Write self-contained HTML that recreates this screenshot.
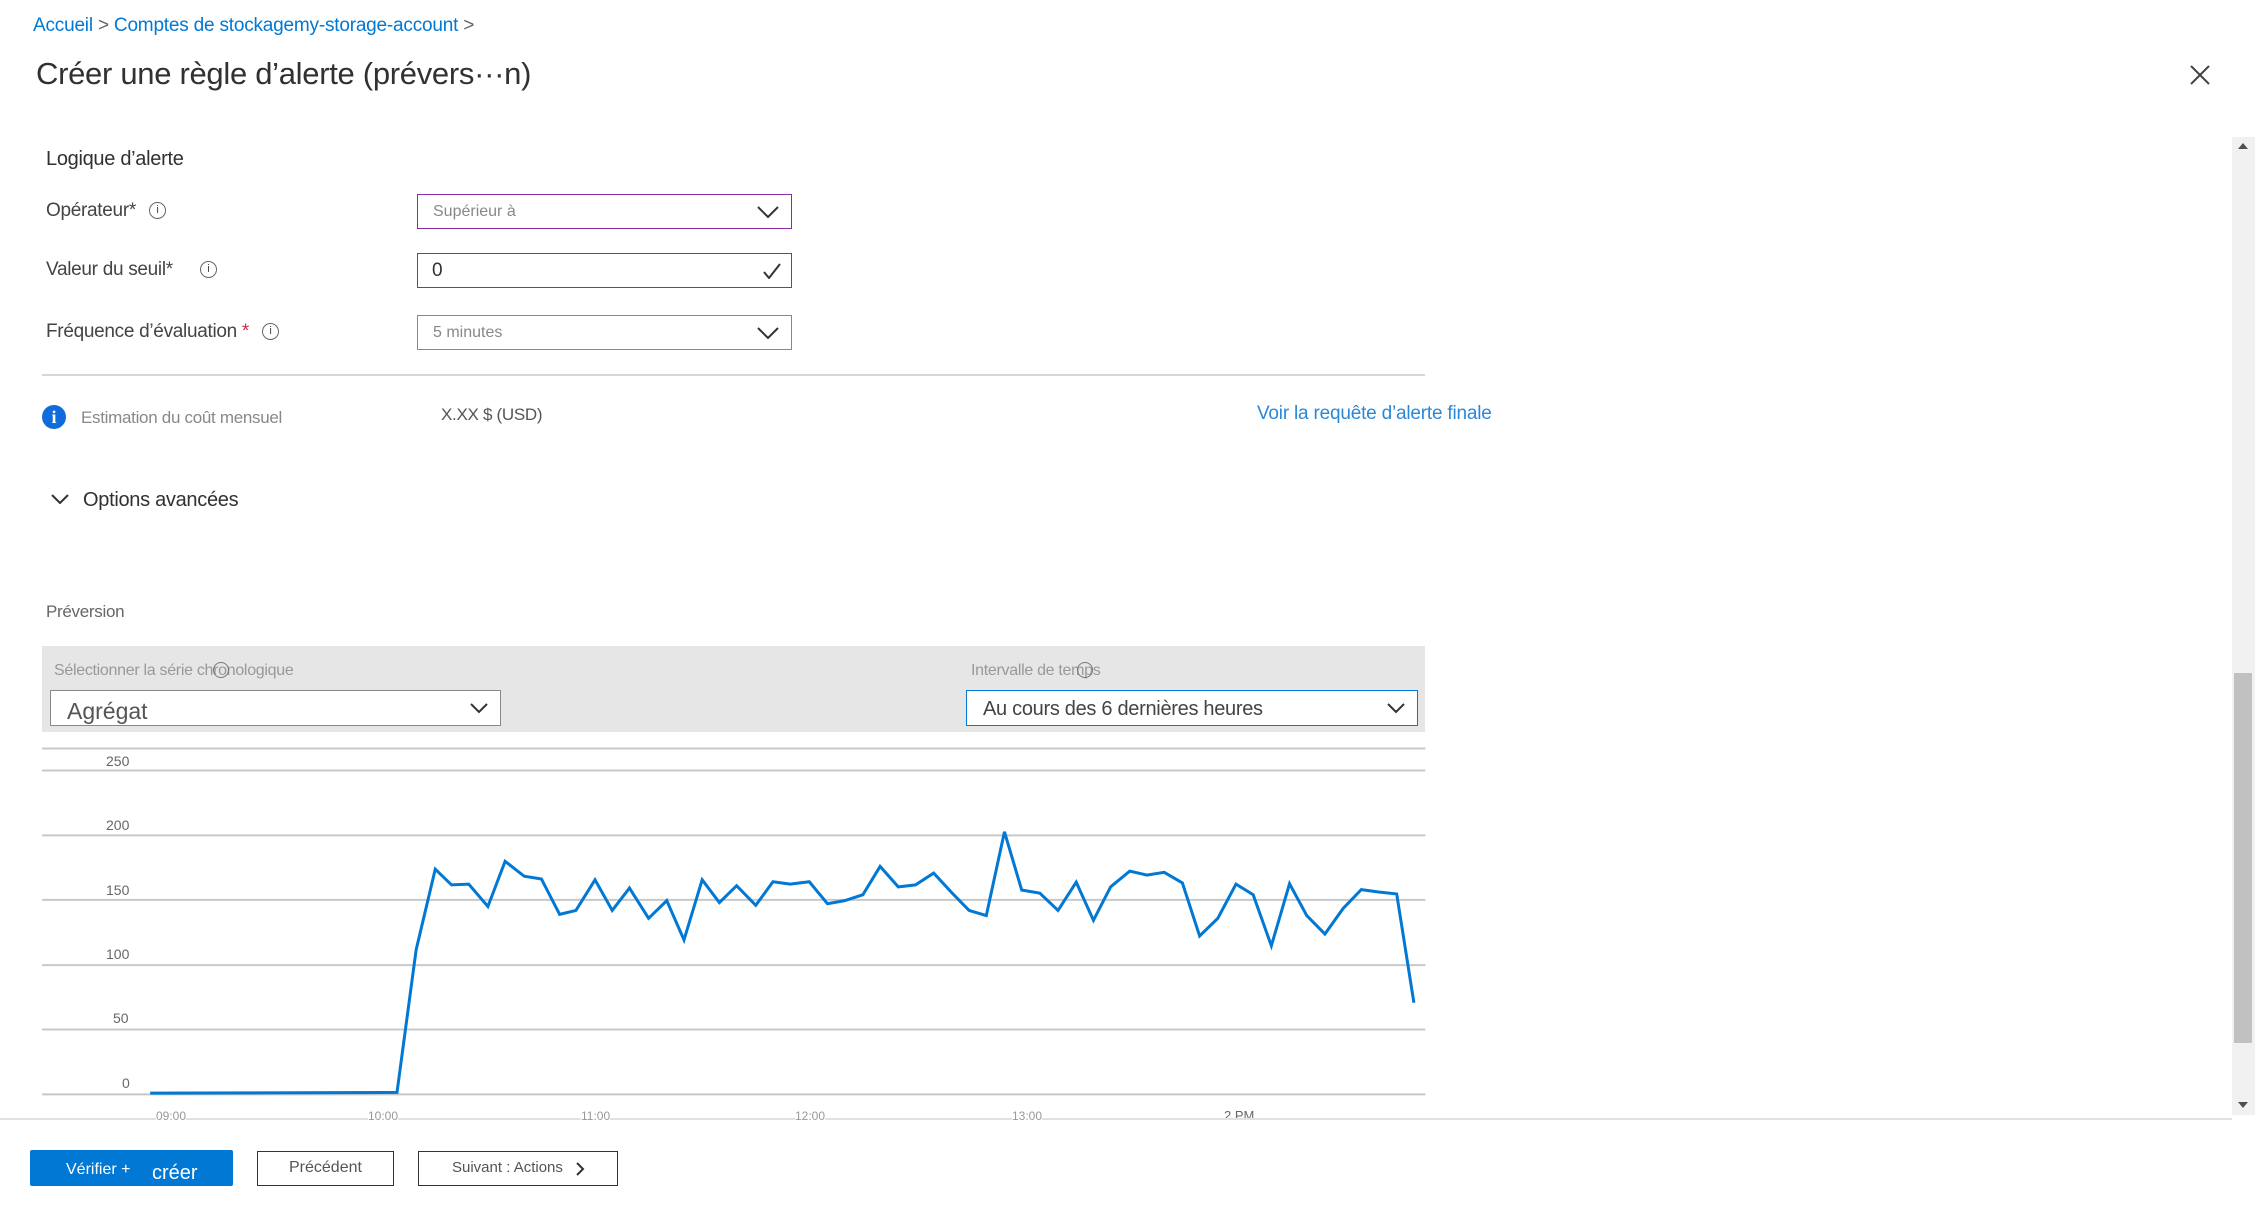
<!DOCTYPE html>
<html><head><meta charset="utf-8"><style>
body{margin:0;width:2255px;height:1215px;background:#fff;font-family:"Liberation Sans",sans-serif;position:relative;overflow:hidden;color:#323130}
.a{position:absolute;white-space:nowrap}
.box{position:absolute;box-sizing:border-box;background:#fff}
.lbl{font-size:19px;color:#444;letter-spacing:-0.3px}
.g{color:#8a8886}
</style></head><body>
<div class="a" style="left:33px;top:15px;font-size:19px;color:#0078d4;letter-spacing:-0.2px">Accueil <span style="color:#666">&gt;</span> Comptes de stockagemy-storage-account <span style="color:#666">&gt;</span></div>
<div class="a" style="left:36px;top:56px;font-size:31px;color:#323130;letter-spacing:-0.3px">Créer une règle d’alerte (prévers···n)</div>
<svg class="a" style="left:2190px;top:65px" width="20" height="20"><path d="M1 1L19 19M19 1L1 19" stroke="#444" stroke-width="2"/></svg>
<div class="a" style="left:2232px;top:137px;width:23px;height:978px;background:#f1f1f1"></div>
<div class="a" style="left:2234px;top:673px;width:18px;height:370px;background:#c1c1c1"></div>
<div class="a" style="left:2238px;top:143px;border:5px solid transparent;border-bottom:6px solid #505050;border-top:0"></div>
<div class="a" style="left:2238px;top:1102px;border:5px solid transparent;border-top:6px solid #505050;border-bottom:0"></div>

<div class="a" style="left:46px;top:148px;font-size:20px;color:#323130;letter-spacing:-0.3px">Logique d’alerte</div>
<div class="a lbl" style="left:46px;top:200px">Opérateur* <span style="display:inline-block;width:15px;height:15px;border:1.5px solid #666;border-radius:50%;font-size:11px;text-align:center;line-height:15px;margin-left:8px;vertical-align:middle">i</span></div>
<div class="a lbl" style="left:46px;top:259px">Valeur du seuil* <span style="display:inline-block;width:15px;height:15px;border:1.5px solid #666;border-radius:50%;font-size:11px;text-align:center;line-height:15px;margin-left:22px;vertical-align:middle">i</span></div>
<div class="a lbl" style="left:46px;top:321px">Fréquence d’évaluation <span style="color:#c4314b">*</span> <span style="display:inline-block;width:15px;height:15px;border:1.5px solid #666;border-radius:50%;font-size:11px;text-align:center;line-height:15px;margin-left:8px;vertical-align:middle">i</span></div>
<div class="box" style="left:417px;top:194px;width:375px;height:35px;border:1.5px solid #8a2da5"><span class="a g" style="left:15px;top:8px;font-size:16px">Supérieur à</span><svg class="a" style="right:12px;top:11px" width="22" height="12"><path d="M1 1L11 11L21 1" stroke="#333" stroke-width="2" fill="none"/></svg></div>
<div class="box" style="left:417px;top:253px;width:375px;height:35px;border:1.5px solid #8a2da5"><span class="a" style="left:14px;top:6px;font-size:19px">0</span><svg class="a" style="right:10px;top:9px" width="18" height="16"><path d="M1 9L6 15L17 1" stroke="#333" stroke-width="2" fill="none"/></svg></div>
<div class="box" style="left:417px;top:315px;width:375px;height:35px;border:1.5px solid #8a8886"><span class="a g" style="left:15px;top:8px;font-size:16px">5 minutes</span><svg class="a" style="right:12px;top:11px" width="22" height="12"><path d="M1 1L11 11L21 1" stroke="#333" stroke-width="2" fill="none"/></svg></div>
<div class="a" style="left:42px;top:374px;width:1383px;height:2px;background:#d6d6d6"></div>
<div class="a" style="left:42px;top:405px;width:24px;height:24px;border-radius:50%;background:#0f6cda;color:#fff;font-weight:bold;font-size:18px;text-align:center;line-height:24px;font-family:'Liberation Serif',serif">i</div>
<div class="a g" style="left:81px;top:408px;font-size:17px;letter-spacing:-0.3px">Estimation du coût mensuel</div>
<div class="a" style="left:441px;top:405px;font-size:17px;color:#555;letter-spacing:-0.3px">X.XX $ (USD)</div>
<div class="a" style="left:1257px;top:403px;font-size:19px;color:#2b88d8;letter-spacing:-0.2px">Voir la requête d’alerte finale</div>
<svg class="a" style="left:51px;top:494px" width="18" height="10"><path d="M1 1L9 9L17 1" stroke="#333" stroke-width="2" fill="none"/></svg>
<div class="a" style="left:83px;top:489px;font-size:20px;letter-spacing:-0.3px">Options avancées</div>
<div class="a g" style="left:46px;top:602px;font-size:17px;color:#666;letter-spacing:-0.3px">Préversion</div>

<div class="a" style="left:42px;top:646px;width:1383px;height:86px;background:#e6e6e6"></div>
<div class="a" style="left:54px;top:662px;font-size:16px;color:#999;letter-spacing:-0.3px">Sélectionner la série chronologique</div>
<div class="a" style="left:213px;top:662px;width:14px;height:14px;border:1.5px solid #777;border-radius:50%"></div>
<div class="a" style="left:971px;top:662px;font-size:16px;color:#999;letter-spacing:-0.3px">Intervalle de temps</div>
<div class="a" style="left:1077px;top:662px;width:14px;height:14px;border:1.5px solid #777;border-radius:50%"></div>
<div class="box" style="left:50px;top:690px;width:451px;height:36px;border:1.5px solid #8a8886"><span class="a" style="left:16px;top:7px;font-size:23px;color:#555">Agrégat</span><svg class="a" style="right:12px;top:12px" width="18" height="11"><path d="M1 1L9 9L17 1" stroke="#333" stroke-width="2" fill="none"/></svg></div>
<div class="box" style="left:966px;top:690px;width:452px;height:36px;border:1.5px solid #0078d4"><span class="a" style="left:16px;top:7px;font-size:20px;color:#444;letter-spacing:-0.3px">Au cours des 6 dernières heures</span><svg class="a" style="right:12px;top:12px" width="18" height="11"><path d="M1 1L9 9L17 1" stroke="#333" stroke-width="2" fill="none"/></svg></div>

<svg class="a" style="left:0;top:600px" width="1500" height="615" viewBox="0 0 1568 1565" preserveAspectRatio="none">
<g stroke="#c8c8c8" stroke-width="2">
<line x1="44" x2="1490" y1="378" y2="378" vector-effect="non-scaling-stroke"/>
<line x1="44" x2="1490" y1="434" y2="434" vector-effect="non-scaling-stroke"/>
<line x1="44" x2="1490" y1="599" y2="599" vector-effect="non-scaling-stroke"/>
<line x1="44" x2="1490" y1="763" y2="763" vector-effect="non-scaling-stroke"/>
<line x1="44" x2="1490" y1="929" y2="929" vector-effect="non-scaling-stroke"/>
<line x1="44" x2="1490" y1="1093" y2="1093" vector-effect="non-scaling-stroke"/>
<line x1="44" x2="1490" y1="1258" y2="1258" vector-effect="non-scaling-stroke"/>
</g>
<polyline fill="none" stroke="#0078d4" stroke-width="3" vector-effect="non-scaling-stroke" points="157,1255 415,1253 435,890 455,685 472,725 490,723 510,780 528,665 548,703 566,710 585,800 602,790 622,712 640,790 658,733 678,810 697,765 715,865 734,712 752,770 770,727 790,777 808,717 826,723 846,717 865,773 883,765 902,750 920,678 939,730 957,725 976,695 995,745 1013,790 1031,803 1050,590 1068,738 1087,746 1106,790 1125,718 1143,815 1161,730 1181,690 1199,700 1217,693 1236,720 1254,855 1273,810 1292,723 1310,750 1329,880 1348,722 1366,803 1385,850 1404,785 1423,737 1441,743 1460,748 1478,1025"/>
</svg>
<div class="a" style="left:106px;top:753px;font-size:14px;color:#666">250</div>
<div class="a" style="left:106px;top:817px;font-size:14px;color:#666">200</div>
<div class="a" style="left:106px;top:882px;font-size:14px;color:#666">150</div>
<div class="a" style="left:106px;top:946px;font-size:14px;color:#666">100</div>
<div class="a" style="left:113px;top:1010px;font-size:14px;color:#666">50</div>
<div class="a" style="left:122px;top:1075px;font-size:14px;color:#666">0</div>
<div class="a" style="left:0;top:1118px;width:2232px;height:2px;background:#e1e1e1"></div>
<div class="a" style="left:156px;top:1109px;font-size:12px;color:#999;background:#fff">09:00</div>
<div class="a" style="left:368px;top:1109px;font-size:12px;color:#999;background:#fff">10:00</div>
<div class="a" style="left:581px;top:1109px;font-size:12px;color:#999;background:#fff">11:00</div>
<div class="a" style="left:795px;top:1109px;font-size:12px;color:#999;background:#fff">12:00</div>
<div class="a" style="left:1012px;top:1109px;font-size:12px;color:#999;background:#fff">13:00</div>
<div class="a" style="left:1224px;top:1108px;font-size:13px;color:#666;height:10px;overflow:hidden">2 PM</div>

<div class="a" style="left:30px;top:1150px;width:203px;height:36px;background:#0078d4;border-radius:2px"></div>
<div class="a" style="left:66px;top:1161px;font-size:16px;color:#fff">Vérifier +</div>
<div class="a" style="left:152px;top:1162px;font-size:20px;color:#fff">créer</div>
<div class="box" style="left:257px;top:1151px;width:137px;height:35px;border:1.5px solid #333"></div>
<div class="a" style="left:289px;top:1159px;font-size:16px;color:#555">Précédent</div>
<div class="box" style="left:418px;top:1151px;width:200px;height:35px;border:1.5px solid #333"></div>
<div class="a" style="left:452px;top:1159px;font-size:15px;color:#555">Suivant : Actions</div>
<svg class="a" style="left:575px;top:1162px" width="10" height="14"><path d="M2 1L8 7L2 13" stroke="#333" stroke-width="2" fill="none"/></svg>
</body></html>
